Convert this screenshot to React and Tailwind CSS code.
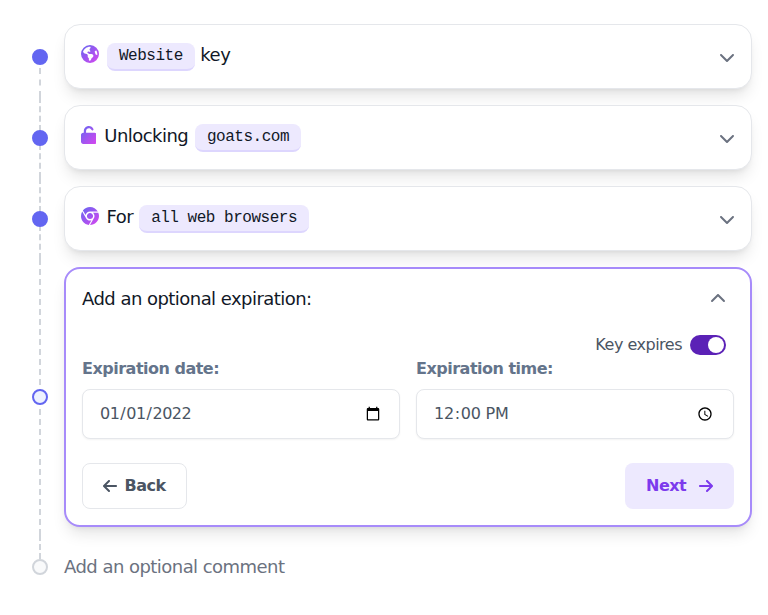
import React from "react";
import {
  FaEarthAmericas,
  FaUnlock,
  FaChrome,
  FaChevronDown,
  FaChevronUp,
  FaArrowLeft,
  FaArrowRight,
} from "react-icons/fa6";

function Segment({ className }) {
  return <div className={`w-0 shrink-0 border-l-2 border-dashed border-[#d1d5db] ${className}`} />;
}

const dotStyles = {
  done: "border-[#6366f1] bg-[#6366f1]",
  active: "border-[#6366f1] bg-[#eef2ff]",
  idle: "border-[#d1d5db] bg-[#f9fafb]",
};

function Step({ state, top, bottom, children }) {
  return (
    <li className="flex">
      <div className="flex w-4 shrink-0 flex-col items-center">
        {top}
        <div className={`relative z-10 size-4 shrink-0 rounded-full border-2 ${dotStyles[state]}`} />
        {bottom}
      </div>
      <div className="ml-4 min-w-0 flex-1 py-2">{children}</div>
    </li>
  );
}

function Card({ children }) {
  return (
    <div className="flex h-[65px] items-center justify-between rounded-2xl border border-[#e5e7eb] bg-white px-4 text-lg tracking-[-0.54px] text-[#111827] shadow-lg">
      <div className="flex items-center pb-1">{children}</div>
      <FaChevronDown className="mt-px size-4 text-[#6b7280]" />
    </div>
  );
}

function CardIcon({ icon: Icon, narrow }) {
  return (
    <span className={`mb-0.5 h-[18px] shrink-0 overflow-hidden ${narrow ? "mr-2 w-[15.3px]" : "mr-[8.5px] w-[17.5px]"}`}>
      <Icon className={`h-[18px] max-w-none ${narrow ? "w-[15.75px]" : "w-[18px]"}`} fill="url(#violet)" />
    </span>
  );
}

function Badge({ children }) {
  return (
    <span className="mt-1 h-7 rounded-lg border-b-2 border-[#ddd6fe] bg-[#ede9fe] px-3 pt-px font-['Liberation_Mono',monospace] text-base leading-6 tracking-[-0.48px]">
      {children}
    </span>
  );
}

export default function App() {
  return (
    <div className="h-[615px] overflow-hidden bg-white px-4 pt-4 pl-8 font-['DejaVu_Sans',sans-serif] tracking-[-0.5px]">
      <svg className="absolute size-0" aria-hidden="true">
        <defs>
          <linearGradient id="violet" x1="0" y1="0" x2="1" y2="1">
            <stop offset="0" stopColor="#6366f1" />
            <stop offset="1" stopColor="#d946ef" />
          </linearGradient>
        </defs>
      </svg>
      <ol>
        <Step state="done" top={<div className="h-[33px]" />} bottom={<Segment className="mt-[3px] h-[29px]" />}>
          <Card>
            <CardIcon icon={FaEarthAmericas} />
            <Badge>Website</Badge>
            <span className="ml-[5.5px]">key</span>
          </Card>
        </Step>
        <Step state="done" top={<Segment className="-mb-px h-[34px]" />} bottom={<Segment className="-mt-0.5 h-[34px]" />}>
          <Card>
            <CardIcon icon={FaUnlock} narrow />
            <span className="mr-[6.8px]">Unlocking</span>
            <Badge>goats.com</Badge>
          </Card>
        </Step>
        <Step state="done" top={<Segment className="-mb-px h-[34px]" />} bottom={<Segment className="-mt-0.5 h-[34px]" />}>
          <Card>
            <CardIcon icon={FaChrome} />
            <span className="mr-1.5 -ml-[0.4px]">For</span>
            <Badge>all web browsers</Badge>
          </Card>
        </Step>
        <Step state="active" top={<Segment className="-mb-1.5 h-[136px]" />} bottom={<Segment className="-mt-1.5 h-[136px]" />}>
          <div className="h-[260px] rounded-2xl border-2 border-[#a78bfa] bg-white px-4 pt-4 shadow-lg">
            <div className="flex h-7 items-center justify-between pr-2 text-lg tracking-[-0.54px] text-[#111827]">
              <h2>Add an optional expiration:</h2>
              <FaChevronUp className="size-4 text-[#6b7280]" />
            </div>
            <div className="mt-[22px] flex h-5 items-center justify-end gap-2 pr-2 text-[#4b5563]">
              <span>Key expires</span>
              <span className="flex h-5 w-9 items-center justify-end rounded-full bg-[#5b21b6] p-0.5">
                <span className="size-4 rounded-full bg-white" />
              </span>
            </div>
            <div className="mt-0.5 grid grid-cols-2 gap-4 text-[#4b5563]">
              <label>
                <span className="block font-bold leading-6 text-[#64748b]">Expiration date:</span>
                <input type="date" defaultValue="2022-01-01" className="mt-2 block h-[50px] w-full rounded-lg border border-[#e5e7eb] bg-white px-4 shadow-xs" />
              </label>
              <label>
                <span className="block font-bold leading-6 text-[#64748b]">Expiration time:</span>
                <input type="time" defaultValue="12:00" className="mt-2 block h-[50px] w-full rounded-lg border border-[#e5e7eb] bg-white px-4 tracking-[-0.3px] shadow-xs" />
              </label>
            </div>
            <div className="mt-6 flex justify-between font-bold">
              <button className="flex h-[46px] w-[105px] items-center gap-2 rounded-lg border border-[#e5e7eb] pl-[19.5px] text-[#4b5563]">
                <FaArrowLeft className="h-4 w-3.5" />
                <span>Back</span>
              </button>
              <button className="flex h-[46px] w-[109px] items-center justify-between rounded-lg bg-[#ede9fe] pr-[21px] pl-[21px] text-[#7c3aed]">
                <span>Next</span>
                <FaArrowRight className="h-4 w-3.5" />
              </button>
            </div>
          </div>
        </Step>
        <Step state="idle" top={<Segment className="h-6" />}>
          <div className="pt-2.5 text-lg leading-7 tracking-[-0.54px] text-[#6b7280]">Add an optional comment</div>
        </Step>
      </ol>
    </div>
  );
}
